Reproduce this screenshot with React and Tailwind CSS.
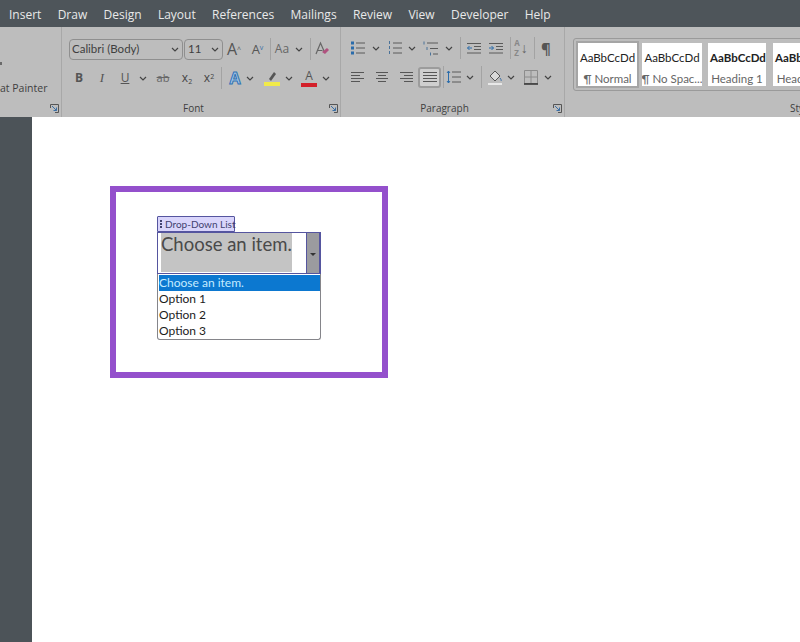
const tabs = ["Insert", "Draw", "Design", "Layout", "References", "Mailings", "Review", "View", "Developer", "Help"];

function Icon({ children, w = 16, h = 16 }) {
  return (
    <svg width={w} height={h} viewBox={`0 0 ${w} ${h}`} fill="none" stroke="#4b4b4b" strokeWidth="1" className="shrink-0">
      {children}
    </svg>
  );
}

function Chevron() {
  return (
    <svg width="8" height="5" viewBox="0 0 8 5" fill="none" stroke="#444" strokeWidth="1.2" className="shrink-0">
      <path d="M1 1l3 3 3-3" />
    </svg>
  );
}

function Launcher() {
  return (
    <svg width="9" height="9" viewBox="0 0 9 9" fill="none" stroke="#555" strokeWidth="1">
      <path d="M.5 4V.5H8.500V8.500H5" />
      <path d="M2 2l4.500 4.500M6.500 3.500v3h-3" stroke="#3a6ea5" />
    </svg>
  );
}

function Sep({ h = "h-[22px]" }) {
  return <div className={`w-px shrink-0 ${h} bg-[#a3a3a3]`} />;
}

// cell of fixed width, keeps the ribbon buttons on their columns
function Cell({ w, children }) {
  return <div style={{ width: w }} className="flex shrink-0 items-center justify-center">{children}</div>;
}

function Lines({ rows }) {
  return (
    <Icon w={18} h={14}>
      {rows.map(([x1, x2], i) => (
        <path key={i} d={`M${x1} ${2.5 + i * 3}H${x2}`} stroke="#565656" />
      ))}
    </Icon>
  );
}

function ListIcon({ marks }) {
  return (
    <Icon w={16} h={14}>
      {[2, 7, 12].map((y) => (
        <path key={y} d={`M6 ${y}H15`} stroke="#5a5a5a" />
      ))}
      {[2, 7, 12].map((y) =>
        marks === "dot" ? (
          <rect key={y} x="1" y={y - 1.5} width="3" height="3" fill="#2a6cab" stroke="none" />
        ) : (
          <path key={y} d={`M2.500 ${y - 2}v3`} stroke="#4a7299" />
        )
      )}
    </Icon>
  );
}

function MultiIcon() {
  return (
    <Icon w={17} h={15}>
      <path d="M5 2H16M8 7.500H16M11 13H16" stroke="#5a5a5a" />
      <path d="M2 .5v3M5 6v3M8.500 11.500v3" stroke="#4a7299" />
    </Icon>
  );
}

function IndentIcon({ dir }) {
  return (
    <Icon w={16} h={13}>
      <path d="M1 1.500H15M8 4.500H15M8 7.500H15M1 11H15" stroke="#5a5a5a" />
      <path d={dir === "out" ? "M6 6H1.500M3.500 4L1.500 6l2 2" : "M1 6H5.500M3.500 4l2 2-2 2"} stroke="#2a6cab" />
    </Icon>
  );
}

function StyleCard({ sample, label, bold, w }) {
  return (
    <div style={{ width: w }} className="flex h-[43px] shrink-0 flex-col items-center overflow-hidden bg-white pt-[7px] font-['Lato',sans-serif]">
      <span className={`whitespace-nowrap text-[11.5px] leading-[16px] text-[#222] ${bold ? "self-start pl-[2px] font-bold" : ""}`}>{sample}</span>
      <span className="mt-[6px] whitespace-nowrap text-[11.5px] leading-[14px] text-[#666]">{label}</span>
    </div>
  );
}

function GroupLabel({ children, launcher = true }) {
  return (
    <div className="relative mt-auto flex h-[18px] items-center justify-center pr-[22px] text-[10px] text-[#3f3f3f]">
      {children}
      {launcher && <span className="absolute right-[2px] top-[5px] flex"><Launcher /></span>}
    </div>
  );
}

function FontGroup() {
  return (
    <div className="flex h-full w-[279px] shrink-0 flex-col border-r border-[#a8a8a8] pl-[7px] pt-[11px]">
      <div className="flex items-center">
        <div className="flex h-[21px] w-[114px] items-center justify-between rounded-[4px] border border-[#8f8f8f] pl-[2px] pr-[3px] font-['Lato',sans-serif] text-[11.5px] text-[#3f3f3f]">
          Calibri (Body)
          <Chevron />
        </div>
        <div className="ml-[1px] flex h-[21px] w-[39px] items-center justify-between rounded-[4px] border border-[#8f8f8f] pl-[3px] pr-[3px] font-['Lato',sans-serif] text-[11.5px] text-[#3f3f3f]">
          11
          <Chevron />
        </div>
        <Cell w={22}>
          <span className="text-[16px] leading-none text-[#555]">A<sup className="text-[7px]">^</sup></span>
        </Cell>
        <Cell w={25}>
          <span className="text-[13px] leading-none text-[#555]">A<sup className="text-[7px] text-[#3a6ea5]">v</sup></span>
        </Cell>
        <Sep />
        <Cell w={22}><span className="text-[12px] text-[#666]">Aa</span></Cell>
        <Cell w={12}><Chevron /></Cell>
        <Cell w={5}><span /></Cell>
        <Sep />
        <Cell w={22}>
          <svg width="16" height="16" viewBox="0 0 16 16" fill="none">
            <path d="M2 13L6.500 2 10 10M3.500 9.500H8.500" stroke="#666" strokeWidth="1.200" />
            <path d="M8 11l5-4 2 2-4 4z" fill="#b0527f" />
          </svg>
        </Cell>
      </div>
      <div className="mt-[7px] flex h-[22px] items-center">
        <Cell w={20}><span className="text-[12px] font-bold text-[#555]">B</span></Cell>
        <Cell w={26}><span className="font-['Liberation_Serif',serif] text-[13px] italic text-[#555]">I</span></Cell>
        <Cell w={20}><span className="text-[12px] text-[#555] underline">U</span></Cell>
        <Cell w={16}><Chevron /></Cell>
        <Cell w={24}><span className="text-[11px] text-[#666] line-through">ab</span></Cell>
        <Cell w={24}><span className="text-[12px] leading-none text-[#444]">x<sub className="text-[7px]">2</sub></span></Cell>
        <Cell w={20}><span className="text-[12px] leading-none text-[#444]">x<sup className="text-[7px]">2</sup></span></Cell>
        <Cell w={5}><Sep /></Cell>
        <Cell w={22}>
          <span className="text-[16px] font-bold leading-none text-[#a9c8e6] [-webkit-text-stroke:1px_#2f73b5]">A</span>
        </Cell>
        <Cell w={8}><Chevron /></Cell>
        <div className="flex w-[29px] shrink-0 justify-center pl-[6px]">
          <svg width="18" height="18" viewBox="0 0 18 18" fill="none">
            <path d="M6 10l5-7 2 2-5 7z" fill="#555" />
            <rect x="1" y="13" width="16" height="4" fill="#f1ea4a" />
          </svg>
        </div>
        <Cell w={12}><Chevron /></Cell>
        <Cell w={28}>
          <div className="flex w-[16px] flex-col items-center leading-none">
            <span className="text-[12px] leading-[12px] text-[#555]">A</span>
            <span className="mt-[1px] h-[4px] w-full bg-[#d3202a]" />
          </div>
        </Cell>
        <Cell w={6}><Chevron /></Cell>
      </div>
      <GroupLabel>Font</GroupLabel>
    </div>
  );
}

function ParagraphGroup() {
  return (
    <div className="flex h-full w-[224px] shrink-0 flex-col border-r border-[#a8a8a8] pl-[6px] pt-[10px]">
      <div className="flex h-[22px] items-center">
        <Cell w={22}><ListIcon marks="dot" /></Cell>
        <Cell w={14}><Chevron /></Cell>
        <Cell w={24}><ListIcon marks="num" /></Cell>
        <Cell w={10}><Chevron /></Cell>
        <Cell w={26}><MultiIcon /></Cell>
        <Cell w={12}><Chevron /></Cell>
        <Cell w={10}><Sep /></Cell>
        <Cell w={18}><IndentIcon dir="out" /></Cell>
        <Cell w={26}><IndentIcon dir="in" /></Cell>
        <Cell w={2}><Sep /></Cell>
        <Cell w={20}>
          <div className="flex items-center gap-[1px]">
            <span className="flex flex-col text-[8px] font-bold leading-[10px] text-[#888]"><span>A</span><span>Z</span></span>
            <span className="text-[14px] leading-none text-[#666]">↓</span>
          </div>
        </Cell>
        <Cell w={6}><Sep /></Cell>
        <Cell w={18}><span className="text-[15px] font-bold text-[#555]">¶</span></Cell>
      </div>
      <div className="mt-[7px] flex h-[22px] items-center">
        <Cell w={22}><Lines rows={[[2, 15], [2, 11], [2, 15], [2, 11]]} /></Cell>
        <Cell w={26}><Lines rows={[[3, 15], [5, 13], [3, 15], [5, 13]]} /></Cell>
        <Cell w={21}><Lines rows={[[3, 16], [7, 16], [3, 16], [7, 16]]} /></Cell>
        <Cell w={27}>
          <div className="flex h-[21px] w-[23px] items-center justify-center rounded-[3px] border-2 border-[#9c9c9c] bg-[#cfcfcf]">
            <Lines rows={[[2, 16], [2, 16], [2, 16], [2, 16]]} />
          </div>
        </Cell>
        <Cell w={1}><Sep /></Cell>
        <Cell w={20}>
          <Icon w={16} h={14}>
            <path d="M6 2H15M6 7H15M6 12H15" stroke="#5a5a5a" />
            <path d="M2.500 1v12M1 3l1.500-2L4 3M1 11l1.500 2L4 11" stroke="#2a6cab" />
          </Icon>
        </Cell>
        <Cell w={12}><Chevron /></Cell>
        <Cell w={10}><Sep /></Cell>
        <Cell w={18}>
          <svg width="18" height="18" viewBox="0 0 18 18" fill="none" stroke="#555">
            <path d="M4 8l5-5 5 5-5 5z" fill="#d9d9d9" />
            <path d="M14 10c1 1.500 1.500 2 1 3" stroke="#3a6ea5" />
            <path d="M2 16H16" stroke="#e8e8e8" strokeWidth="2" />
          </svg>
        </Cell>
        <Cell w={14}><Chevron /></Cell>
        <Cell w={26}>
          <svg width="16" height="16" viewBox="0 0 16 16" fill="none" stroke="#8c8c8c">
            <path d="M1.500 1.500H14.500V14.500H1.500zM8 1.500V14.500" />
            <path d="M1.500 8H14.500" />
            <path d="M1 15H15" stroke="#333" strokeWidth="1.500" />
          </svg>
        </Cell>
        <Cell w={8}><Chevron /></Cell>
      </div>
      <GroupLabel>Paragraph</GroupLabel>
    </div>
  );
}

function StylesGroup() {
  return (
    <div className="flex h-full min-w-0 flex-1 flex-col overflow-hidden pl-[8px] pt-[11px]">
      <div className="flex h-[53px] w-[260px] items-start rounded-[3px] border border-[#9a9a9a] pl-[2px] pt-[2px]">
        <div className="flex items-center">
          <div className="border-2 border-[#a5a5a5]">
            <StyleCard sample="AaBbCcDd" label="¶ Normal" w={59} />
          </div>
          <div className="ml-[3px]"><StyleCard sample="AaBbCcDd" label="¶ No Spac..." w={60} /></div>
          <div className="ml-[6px]"><StyleCard sample="AaBbCcDd" label="Heading 1" bold w={58} /></div>
          <div className="ml-[7px]"><StyleCard sample="AaBbCcDd" label="Heading 2" bold w={59} /></div>
        </div>
      </div>
      <div className="mt-auto flex h-[18px] items-center pl-[217px] text-[10px] text-[#3f3f3f]">Styles</div>
    </div>
  );
}

function ContentControl() {
  return (
    <div className="flex h-[192px] w-[278px] flex-col border-[6px] border-[#9450cc] pl-[41px] pt-[24px] font-['Lato',sans-serif]">
      <div className="flex h-[16px] w-[78px] items-center whitespace-nowrap rounded-t-[1px] border border-[#55559f] bg-[#d9d5fb] pl-[2px] text-[10px] leading-none text-[#41416f]">
        <span className="mr-[3px] flex flex-col gap-[1px]">
          <span className="h-[2px] w-[2px] bg-[#41416f]" />
          <span className="h-[2px] w-[2px] bg-[#41416f]" />
          <span className="h-[2px] w-[2px] bg-[#41416f]" />
        </span>
        Drop-Down List
      </div>
      <div className="flex h-[42px] w-[164px] border border-[#55559f] bg-white pl-[3px]">
        <div className="h-[39px] w-[131px] overflow-hidden whitespace-nowrap bg-[#c4c4c4] text-[18.500px] leading-[22px] text-[#4a4a4a]">
          Choose an item.
        </div>
        <div className="ml-auto flex w-[14px] items-center justify-center border-x border-[#55559f] bg-[#9b9b9f] pt-[2px]">
          <span className="h-0 w-0 border-x-[3px] border-t-[3px] border-x-transparent border-t-[#333]" />
        </div>
      </div>
      <div className="h-[66px] w-[164px] rounded-b-[3px] border border-t-0 border-[#85858a] bg-white pl-[1px] pt-[1px] text-[12px] leading-[16px] text-[#1c1c1c]">
        <div className="bg-[#0c78d0] text-[#c4ecff]">Choose an item.</div>
        <div>Option 1</div>
        <div>Option 2</div>
        <div>Option 3</div>
      </div>
    </div>
  );
}

export default function App() {
  return (
    <div className="flex h-[642px] w-[800px] flex-col overflow-hidden bg-white font-['Open_Sans',sans-serif]">
      <div className="flex h-[27px] shrink-0 items-center gap-[16.300px] bg-[#4e555a] pl-[9px] pt-[2px] text-[12px] text-[#e9e9e9]">
        {tabs.map((t) => (
          <span key={t}>{t}</span>
        ))}
      </div>
      <div className="flex h-[90px] shrink-0 bg-[#bdbdbd]">
        <div className="flex h-full w-[62px] shrink-0 flex-col border-r border-[#a8a8a8] pt-[35px]">
          <span className="h-[3px] w-[2px] bg-[#6a6a6a]" />
          <span className="mt-[16px] whitespace-nowrap pr-[14px] text-right text-[10.5px] leading-[14px] text-[#3f3f3f]">at Painter</span>
          <GroupLabel> </GroupLabel>
        </div>
        <FontGroup />
        <ParagraphGroup />
        <StylesGroup />
      </div>
      <div className="flex min-h-0 flex-1">
        <div className="w-[32px] shrink-0 bg-[#4c5358]" />
        <div className="flex-1 pl-[78px] pt-[69px]">
          <ContentControl />
        </div>
      </div>
    </div>
  );
}
